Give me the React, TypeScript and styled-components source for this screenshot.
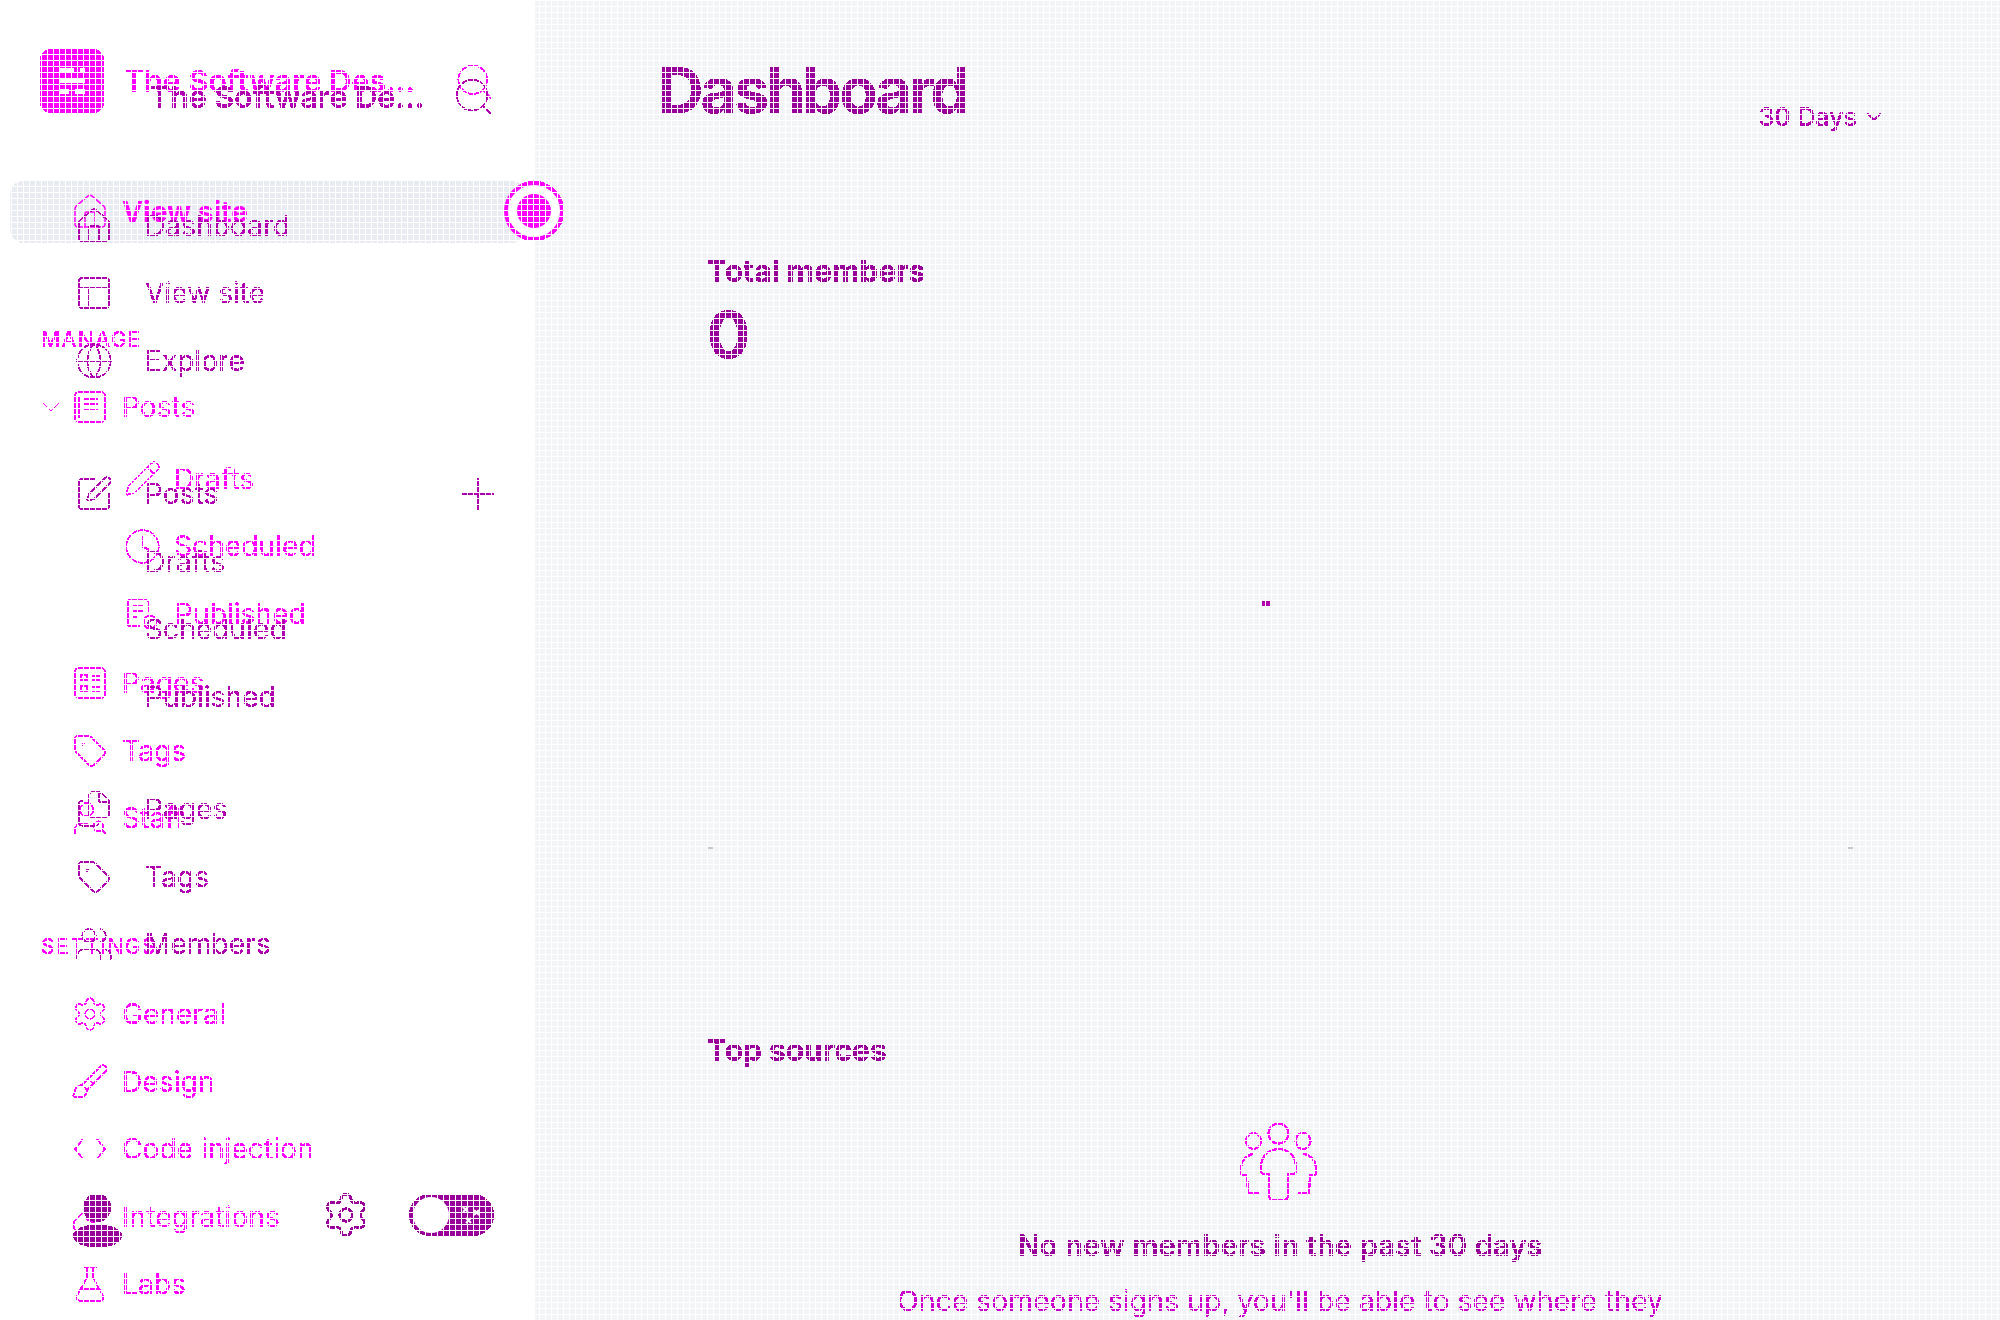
import React from "react";
import styled, { createGlobalStyle } from "styled-components";
import {
  Search, Home, PanelsTopLeft, Globe, SquarePen, Plus, Tag, Settings, Pencil, Clock,
  ChevronDown, FlaskConical, Brush, Users, UserSearch, Files, Link,
} from "lucide-react";

const Global = createGlobalStyle`
  html, body { margin: 0; padding: 0; background: #fff; }
  body { font-family: Inter, "Liberation Sans", sans-serif; }
  * { box-sizing: border-box; }
`;

const MAGENTA = "#ff00ff";
const PURPLE = "#b000b0";
const DEEP = "#990099";

const Page = styled.div`
  position: relative;
  display: grid;
  grid-template-columns: 535px 1fr;
  width: 2000px;
  height: 1320px;
  overflow: hidden;
`;
const GridVeil = styled.div`
  position: absolute;
  inset: 0;
  z-index: 10;
  pointer-events: none;
  background-image:
    repeating-linear-gradient(to right, transparent 0 5px, #fff 5px 6px),
    repeating-linear-gradient(to bottom, #fff 0 1px, transparent 1px 6px);
`;
const FilterDefs = styled.svg`
  position: absolute;
  width: 0;
  height: 0;
`;
const Sidebar = styled.aside`
  position: relative;
  background: #fff;
`;
const Layer = styled.div`
  filter: url(#crisp);
`;
const MagentaLayer = styled(Layer)`
  color: ${MAGENTA};
  padding-top: 49px;
`;
const PurpleLayer = styled(Layer)`
  position: absolute;
  inset: 0;
  color: ${PURPLE};
  padding-top: 80px;
`;
const Brand = styled.div`
  display: flex;
  align-items: center;
  height: 64px;
  padding-left: 40px;
  gap: 20px;
`;
const BrandTitle = styled.div<{ $w: number }>`
  width: ${(p) => p.$w}px;
  font-size: 30.5px;
  font-weight: 600;
  line-height: 34px;
  white-space: nowrap;
  overflow: hidden;
  text-overflow: ellipsis;
`;
const BrandSearch = styled(Search)`
  margin-left: 13px;
`;
const Row = styled.div<{ $top?: number; $indent?: number; $gap?: number; $active?: boolean }>`
  position: relative;
  display: flex;
  align-items: center;
  height: ${(p) => (p.$active ? 62 : 67.5)}px;
  margin: ${(p) => p.$top ?? 0}px 0 0 0;
  padding-left: ${(p) => p.$indent ?? 74}px;
  gap: ${(p) => p.$gap ?? 16}px;
  font-size: 28.2px;
  font-weight: ${(p) => (p.$active ? 700 : 400)};
  white-space: nowrap;
  > svg { flex: none; margin: -4px; }
  > svg.plain { margin: 0; }
  > svg.tight { margin: -3px; }
  > svg.tag { margin: -2px; }
`;
const ActiveBand = styled.div`
  position: absolute;
  left: 10px;
  top: 0;
  width: 515px;
  height: 62px;
  border-radius: 14px;
  background: #e9ebf2;
  z-index: -1;
`;
const Caret = styled.span`
  position: absolute;
  left: 35px;
  top: 50%;
  margin-top: -16px;
  display: flex;
`;
const SectionLabel = styled.div<{ $top: number }>`
  height: 20px;
  margin-top: ${(p) => p.$top}px;
  padding-left: 41px;
  font-size: 21px;
  line-height: 20px;
  font-weight: 500;
  letter-spacing: 1.4px;
`;
const GlobeBadge = styled.div`
  position: absolute;
  left: 504px;
  top: 0;
  width: 60px;
  height: 60px;
  border-radius: 50%;
  background: #fff;
  border: 4px solid ${MAGENTA};
  display: flex;
  align-items: center;
  justify-content: center;
  &::after {
    content: "";
    width: 34px;
    height: 34px;
    border-radius: 50%;
    background: ${MAGENTA};
  }
`;
const TitleRow = styled.div`
  display: flex;
  align-items: center;
  height: 34px;
  padding-left: 150px;
  gap: 23px;
`;
const PlusSlot = styled.span`
  position: absolute;
  left: 451px;
  top: 50%;
  margin-top: -27px;
  display: flex;
`;
const Footer = styled.div`
  display: flex;
  align-items: flex-start;
  margin-top: 216px;
  padding: 0 41px 0 73px;
`;
const Avatar = styled.svg`
  width: 49px;
  height: 53px;
  color: ${DEEP};
`;
const FootGear = styled.span`
  display: flex;
  margin: -4px 0 0 199px;
  color: ${DEEP};
`;
const Toggle = styled.div`
  position: relative;
  display: flex;
  align-items: center;
  justify-content: flex-end;
  margin-left: 38px;
  width: 85px;
  height: 42px;
  padding-right: 12px;
  border-radius: 21px;
  background: ${DEEP};
  color: #fff;
`;
const Knob = styled.span`
  position: absolute;
  left: 4px;
  top: 3px;
  width: 36px;
  height: 36px;
  border-radius: 50%;
  background: #fff;
`;
const Main = styled.main`
  background: #f3f4f7;
  padding: 0 114px 0 123px;
  height: 1320px;
  overflow: hidden;
`;
const Content = styled(Layer)`
  color: ${DEEP};
`;
const Head = styled.header`
  display: flex;
  justify-content: space-between;
  align-items: flex-start;
  padding-top: 56px;
`;
const H1 = styled.h1`
  margin: 0;
  font-size: 63px;
  line-height: 68px;
  font-weight: 700;
  letter-spacing: -3px;
`;
const RangeSelect = styled.div`
  display: flex;
  align-items: center;
  gap: 5px;
  margin-top: 46px;
  color: ${PURPLE};
  font-size: 25px;
  line-height: 30px;
  font-weight: 500;
`;
const Body = styled.div`
  padding: 0 33px 0 49px;
`;
const StatLabel = styled.div`
  margin-top: 122px;
  font-size: 30px;
  line-height: 34px;
  font-weight: 700;
`;
const StatValue = styled.div`
  margin-top: 11px;
  font-size: 64px;
  line-height: 72px;
  font-weight: 700;
`;
const Chart = styled.div`
  height: 662px;
  display: flex;
  flex-direction: column;
  align-items: center;
`;
const Dot = styled.span`
  width: 8px;
  height: 6px;
  margin-top: 229px;
  margin-left: -28px;
  border-radius: 2px;
  background: ${PURPLE};
`;
const Axis = styled.div`
  display: flex;
  justify-content: space-between;
  width: 100%;
  margin-top: 241px;
  color: #c8c8cc;
`;
const Tick = styled.span`
  width: 6px;
  height: 2px;
  background: currentColor;
`;
const SectionHead = styled.div`
  font-size: 30px;
  line-height: 34px;
  font-weight: 700;
`;
const Empty = styled.div`
  display: flex;
  flex-direction: column;
  align-items: center;
  margin-top: 56px;
  text-align: center;
`;
const People = styled.svg`
  width: 80px;
  height: 78px;
  color: ${MAGENTA};
`;
const EmptyTitle = styled.div`
  margin-top: 27.5px;
  font-size: 29.4px;
  line-height: 34px;
  font-weight: 600;
`;
const EmptyText = styled.div`
  margin-top: 18px;
  width: 800px;
  font-size: 28.4px;
  line-height: 40px;
  color: #cc00cc;
`;

const Logo = () => (
  <svg width="64" height="64" viewBox="0 0 64 64" style={{ flex: "none" }}>
    <rect width="64" height="64" rx="11" fill={MAGENTA} />
    <g fill="#fff">
      <rect x="19" y="19" width="15" height="5" />
      <rect x="40" y="19" width="5" height="5" />
      <rect x="19" y="29" width="26" height="5" />
      <rect x="19" y="40" width="10" height="5" />
      <rect x="35" y="40" width="10" height="5" />
    </g>
  </svg>
);

const Glyph: React.FC<{ w?: number; h?: number; children: React.ReactNode }> = ({ w = 32, h = 32, children }) => (
  <svg className="plain" width={w} height={h} viewBox={`0 0 ${w} ${h}`} fill="none" stroke="currentColor" strokeWidth="1.6">
    {children}
  </svg>
);

const I = { strokeWidth: 1.5, absoluteStrokeWidth: true } as const;

export default function App() {
  return (
    <>
      <Global />
      <FilterDefs aria-hidden="true">
        <filter id="crisp" x="0" y="0" width="100%" height="100%" colorInterpolationFilters="sRGB">
          <feComponentTransfer>
            <feFuncA type="discrete" tableValues="0 1 1" />
          </feComponentTransfer>
        </filter>
      </FilterDefs>
      <Page>
        <Sidebar>
          <MagentaLayer>
            <Brand>
              <Logo />
              <BrandTitle $w={296}>The Software Design</BrandTitle>
              <BrandSearch size={43} {...I} />
            </Brand>
            <Row $active $top={68} style={{ isolation: "isolate" }}>
              <ActiveBand />
              <Home size={40} {...I} />
              View site
              <GlobeBadge />
            </Row>
            <SectionLabel $top={87}>MANAGE</SectionLabel>
            <Row $top={23}>
              <Caret><ChevronDown size={32} strokeWidth={1} absoluteStrokeWidth /></Caret>
              <Glyph>
                <rect x="1" y="1" width="30" height="30" rx="4" />
                <path d="M9 8h15M9 13h15M9 18h15M5 5v22" />
              </Glyph>
              Posts
            </Row>
            <Row $top={4.5} $indent={127} $gap={16}><Pencil size={39} {...I} />Drafts</Row>
            <Row $indent={127} $gap={16}><Clock size={39} {...I} />Scheduled</Row>
            <Row $indent={127} $gap={17}>
              <Glyph w={31} h={30}>
                <path d="M13 27H3a2 2 0 0 1-2-2V3a2 2 0 0 1 2-2h15a4 4 0 0 1 4 4v9" />
                <path d="M6 7h11M6 12h11M6 18h5" />
                <circle cx="23" cy="23" r="6.500" />
              </Glyph>
              Published
            </Row>
            <Row $top={2}>
              <Glyph>
                <rect x="1" y="1" width="30" height="30" rx="4" />
                <rect x="7" y="8" width="6" height="5" />
                <rect x="7" y="19" width="6" height="5" />
                <path d="M18 9h8M18 13h8M18 20h8M18 24h8" />
              </Glyph>
              Pages
            </Row>
            <Row><Tag className="tag" size={36} {...I} />Tags</Row>
            <Row><UserSearch size={40} {...I} />Staff</Row>
            <SectionLabel $top={84.5}>SETTINGS</SectionLabel>
            <Row $top={24}><Settings className="tight" size={38} {...I} />General</Row>
            <Row><Brush size={40} {...I} />Design</Row>
            <Row>
              <Glyph h={24}>
                <path d="M9 2 1 12l8 10M23 2l8 10-8 10" />
              </Glyph>
              Code injection
            </Row>
            <Row><Link size={40} {...I} />Integrations</Row>
            <Row><FlaskConical size={40} {...I} />Labs</Row>
          </MagentaLayer>
          <PurpleLayer>
            <TitleRow>
              <BrandTitle $w={278}>The Software Design</BrandTitle>
              <Search size={46} {...I} />
            </TitleRow>
            <Row $top={78} $indent={78} $gap={35}><Home size={40} {...I} />Dashboard</Row>
            <Row $indent={78} $gap={35}><PanelsTopLeft size={40} {...I} />View site</Row>
            <Row $indent={78} $gap={35}><Globe size={40} {...I} />Explore</Row>
            <Row $top={66} $indent={78} $gap={35}>
              <SquarePen size={40} {...I} />Posts
              <PlusSlot><Plus size={54} {...I} /></PlusSlot>
            </Row>
            <Row $indent={145}>Drafts</Row>
            <Row $indent={145}>Scheduled</Row>
            <Row $indent={145}>Published</Row>
            <Row $top={45} $indent={78} $gap={35}><Files size={40} {...I} />Pages</Row>
            <Row $indent={78} $gap={35}><Tag className="tag" size={36} {...I} />Tags</Row>
            <Row $indent={78} $gap={35}><Users size={40} {...I} />Members</Row>
            <Footer>
              <Avatar viewBox="0 0 49 53" fill="currentColor">
                <circle cx="24" cy="14" r="14" />
                <ellipse cx="24.5" cy="42" rx="24.5" ry="11.5" />
              </Avatar>
              <FootGear><Settings size={50} strokeWidth={2.5} absoluteStrokeWidth /></FootGear>
              <Toggle>
                <Knob />
                <svg width="22" height="22" viewBox="0 0 22 22" fill="none" stroke="currentColor" strokeWidth="2">
                  <path d="M3 3l5 5M8 3 3 8M14 6l5 5M19 6l-5 5M6 14l5 5M11 14l-5 5" />
                </svg>
              </Toggle>
            </Footer>
          </PurpleLayer>
        </Sidebar>
        <Main>
          <Content>
            <Head>
              <H1>Dashboard</H1>
              <RangeSelect>30 Days <ChevronDown size={24} strokeWidth={2} absoluteStrokeWidth /></RangeSelect>
            </Head>
            <Body>
              <StatLabel>Total members</StatLabel>
              <StatValue>0</StatValue>
              <Chart>
                <Dot />
                <Axis><Tick /><Tick /></Axis>
              </Chart>
              <SectionHead>Top sources</SectionHead>
              <Empty>
                <People viewBox="0 0 80 78" fill="none" stroke="currentColor" strokeWidth="2">
                  <ellipse cx="38.5" cy="10.5" rx="10" ry="10" />
                  <ellipse cx="13.5" cy="18" rx="7.5" ry="8" />
                  <ellipse cx="63" cy="18" rx="7.5" ry="8" />
                  <path d="M30 51h-6a3 3 0 0 1-3-3v-4c0-11 8-18 17.500-18S56 33 56 44v4a3 3 0 0 1-3 3h-5v22a4 4 0 0 1-4 4H33a4 4 0 0 1-4-4V51" />
                  <path d="M14 31C6 32 1 38 1 46v4a2 2 0 0 0 2 2h4l1 18h11" />
                  <path d="M63 31c8 1 13 7 13 15v4a2 2 0 0 1-2 2h-4l-1 18H58" />
                </People>
                <EmptyTitle>No new members in the past 30 days</EmptyTitle>
                <EmptyText>Once someone signs up, you'll be able to see where they came from here.</EmptyText>
              </Empty>
            </Body>
          </Content>
        </Main>
        <GridVeil />
      </Page>
    </>
  );
}
